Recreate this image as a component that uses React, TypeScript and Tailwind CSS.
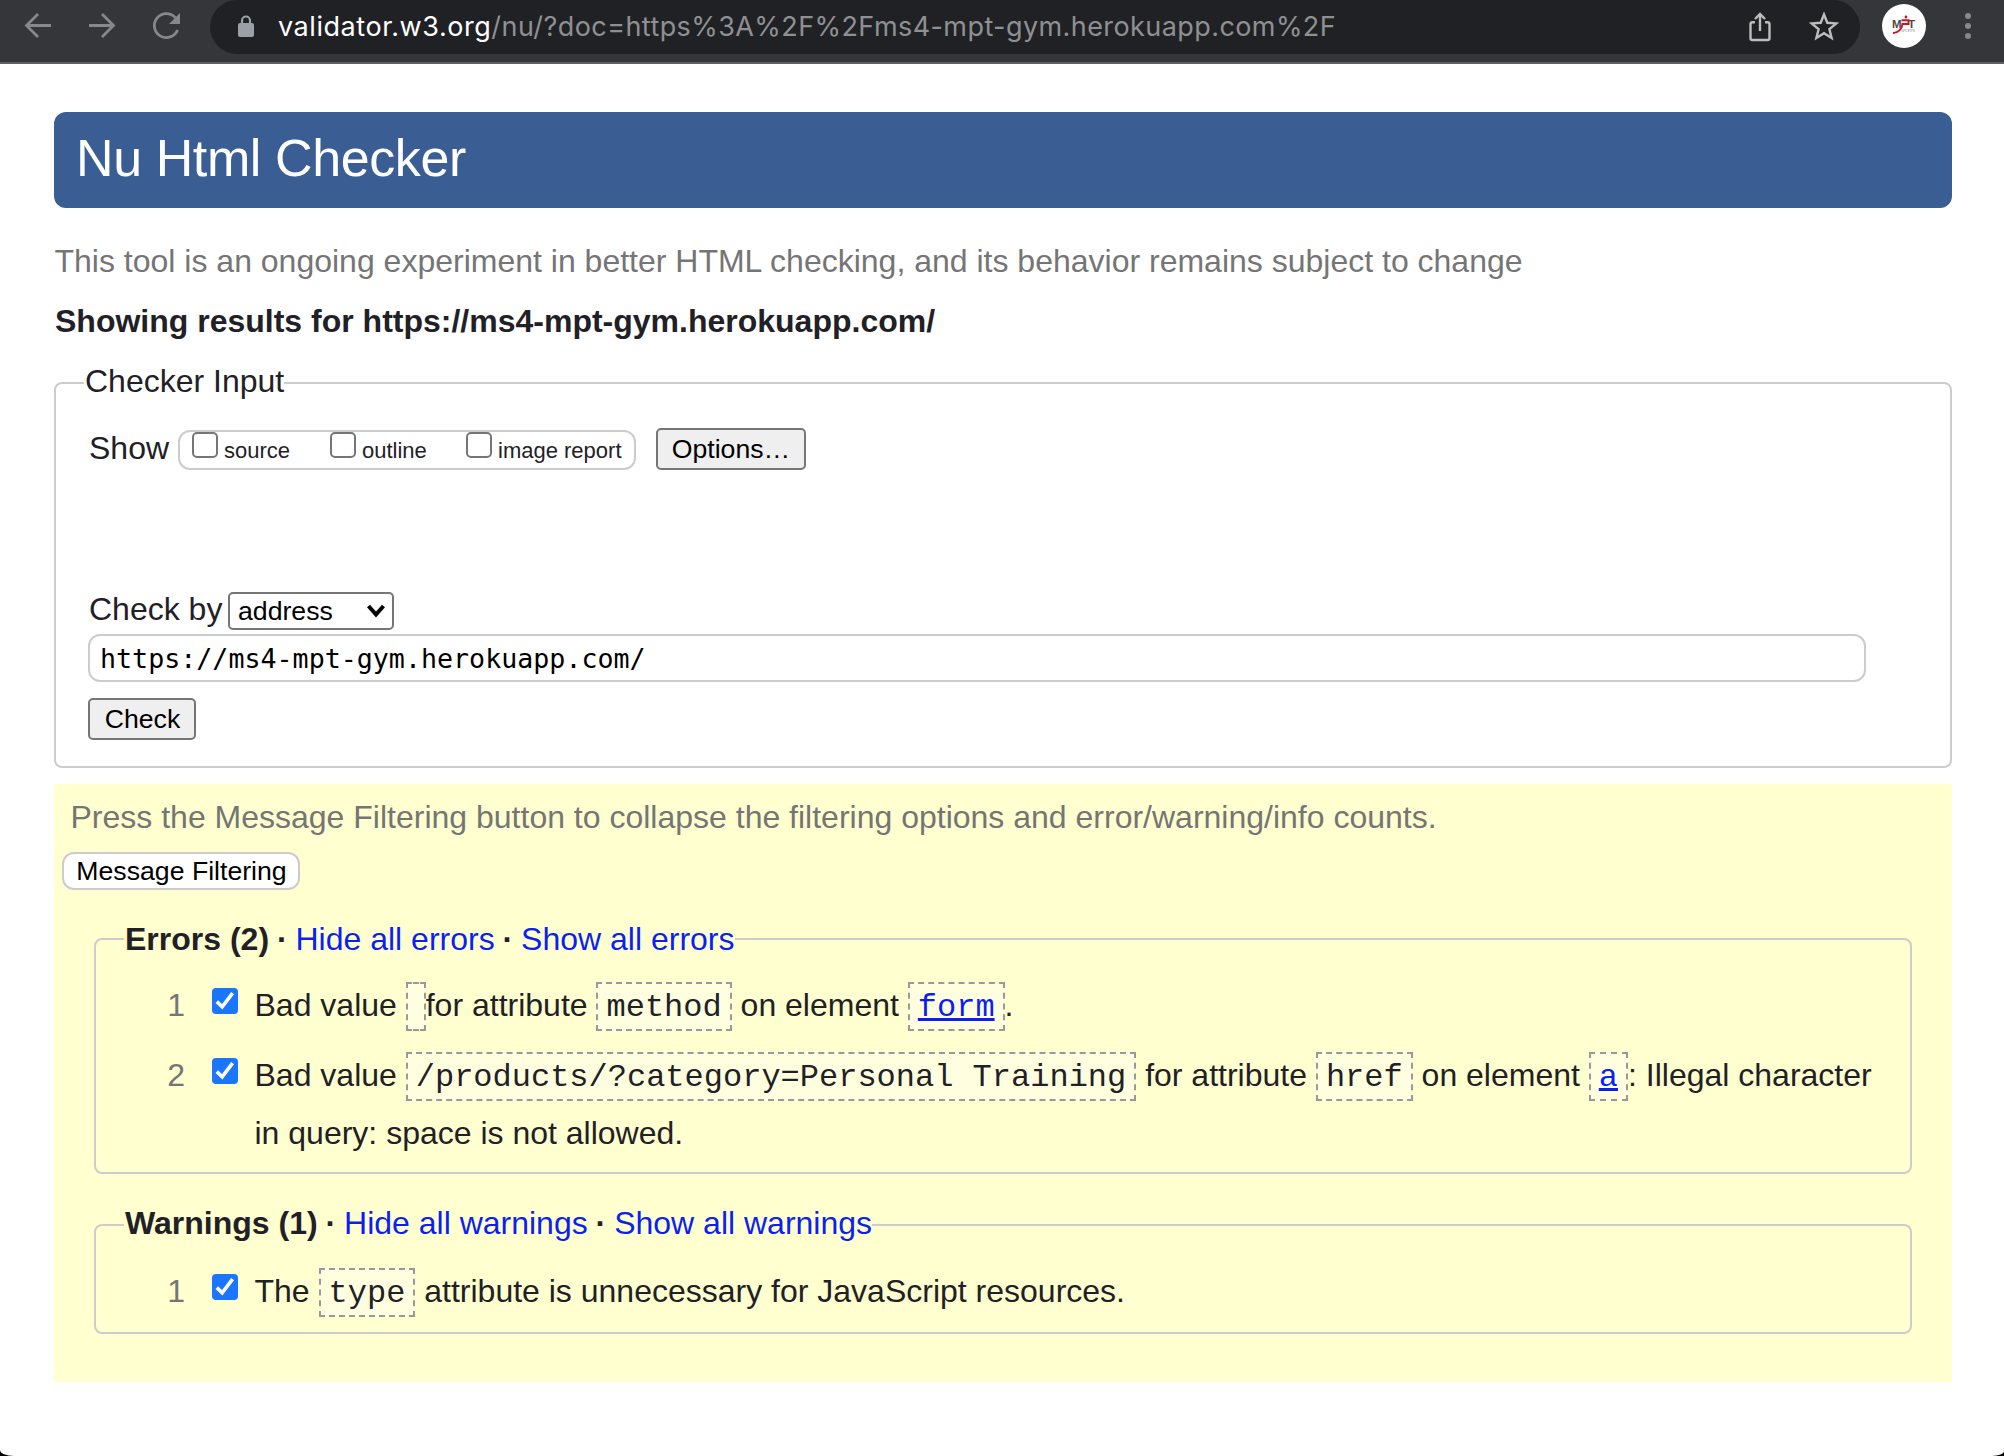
import React from "react";

function Code({ children }: { children?: React.ReactNode }) {
  return (
    <code className="border-2 border-dashed border-[#999] bg-[#ffffe0] px-2 pt-[5px] pb-[3px] font-['Liberation_Mono',monospace] text-[32px] leading-none">
      {children}
    </code>
  );
}

function CheckedBox() {
  return (
    <span className="flex h-[26px] w-[26px] shrink-0 items-center justify-center rounded-[4px] bg-[#1a75ff]">
      <svg width="26" height="26" viewBox="0 0 26 26" fill="none" stroke="#fff" strokeWidth="3.6">
        <path d="M4.8 13.6L10.2 18.8L20.6 5.2" />
      </svg>
    </span>
  );
}

function EmptyBox() {
  return <span className="h-[26px] w-[26px] shrink-0 rounded-[5px] border-2 border-[#767676] bg-white" />;
}

function Row({ n, children }: { n: number; children: React.ReactNode }) {
  return (
    <li className="flex">
      <span className="w-[89px] shrink-0 text-right text-[#757575]">{n}</span>
      <span className="ml-[27px] pt-3"><CheckedBox /></span>
      <span className="ml-[16.5px] flex-1 whitespace-nowrap">{children}</span>
    </li>
  );
}

function Dot() {
  return <b className="-mx-px">·</b>;
}

function Legend({ title, kind, className = "" }: { title: string; kind: string; className?: string }) {
  return (
    <legend className={"ml-7 pl-px text-[32px] leading-[40px] whitespace-nowrap " + className}>
      <b>{title}</b> <Dot /> <a className="text-[#0b1ff5]">Hide all {kind}</a> <Dot /> <a className="text-[#0b1ff5]">Show all {kind}</a>
    </legend>
  );
}

function Toolbar() {
  return (
    <header className="flex h-16 items-start border-b-2 border-[#5f6064] bg-[#35363a]">
      <svg className="shrink-0" width="210" height="54" viewBox="0 0 210 54" fill="none" stroke="#87888a" strokeWidth="2.8">
        <path d="M51 25.5H27M38 14L26.5 25.5L38 37" />
        <path d="M89 25.5H113M102 14L113.5 25.5L102 37" />
        <path d="M177.5 30A12 12 0 1 1 175.5 17.8" />
        <path d="M180 13V24H169Z" fill="#87888a" stroke="none" />
      </svg>
      <div className="flex h-[54px] w-[1650px] shrink-0 rounded-[27px] bg-[#202124]">
        <svg className="ml-7 mt-[15px] shrink-0" width="16" height="22" viewBox="0 0 16 22">
          <rect x="0" y="8" width="16" height="14" rx="2" fill="#9aa0a6" />
          <path d="M4 9V5.5a4 4 0 0 1 8 0V9" fill="none" stroke="#9aa0a6" strokeWidth="2.2" />
        </svg>
        <div className="ml-6 w-[1462px] shrink-0 whitespace-nowrap font-[Inter,sans-serif] text-[27px] leading-[53px] tracking-[0.42px] text-[#8f9092]">
          <span className="tracking-[0.56px] text-white">validator.w3.org</span>/nu/?doc=https%3A%2F%2Fms4-mpt-gym.herokuapp.com%2F
        </div>
        <svg className="shrink-0" width="112" height="54" viewBox="1740 0 112 54" fill="none" stroke="#bdbdbd" strokeWidth="2.4">
          <path d="M1755 22.2H1752.5A2 2 0 0 0 1750.5 24.2V38A2 2 0 0 0 1752.5 40H1767.5A2 2 0 0 0 1769.5 38V24.2A2 2 0 0 0 1767.5 22.2H1765M1760 31V14.5M1755 19L1760 14L1765 19" />
          <path d="M1824 14.5L1827.3 22.8L1836.3 23.4L1829.4 29.2L1831.6 38L1824 33.2L1816.4 38L1818.6 29.2L1811.7 23.4L1820.7 22.8Z" />
        </svg>
      </div>
      <div className="ml-[22px] mt-1 flex h-11 w-11 shrink-0 items-center justify-center rounded-full bg-white">
        <svg width="44" height="44" viewBox="1882 4 44 44">
          <text x="1892" y="28" fontFamily="Liberation Sans" fontWeight="bold" fontSize="11.5" fill="#4a4a4a">M</text>
          <text x="1908" y="28" fontFamily="Liberation Sans" fontWeight="bold" fontSize="11.5" fill="#4a4a4a">T</text>
          <path d="M1901.5 20.3H1908.5V24H1902.5C1902 29 1898 33 1893 33" fill="none" stroke="#cc1420" strokeWidth="2" />
          <circle cx="1906" cy="17" r="1.4" fill="#cc1420" />
          <text x="1901" y="32" fontFamily="Liberation Sans" fontSize="4" textLength="14" fill="#999">SPORTS</text>
        </svg>
      </div>
      <svg className="ml-[38px] shrink-0" width="8" height="54" viewBox="0 0 8 54" fill="#87888a">
        <circle cx="4" cy="16" r="3" /><circle cx="4" cy="26" r="3" /><circle cx="4" cy="36" r="3" />
      </svg>
    </header>
  );
}

export default function App() {
  return (
    <div className="h-[1456px] w-[2004px] overflow-hidden bg-black">
      <div className="h-full overflow-hidden bg-white font-['Liberation_Sans',Arial,sans-serif] text-[32px] text-[#1f2126] [border-radius:0_0_12px_14px/0_0_5px_6px]">
        <Toolbar />
        <main className="ml-[54px] mt-12 w-[1898px]">
          <h1 className="h-24 rounded-xl bg-[#3a5e93] pl-[22px] text-[52px] leading-[92px] tracking-[-0.4px] text-white">Nu Html Checker</h1>
          <p className="ml-[0.5px] mt-[33px] h-10 whitespace-nowrap leading-10 text-[#757575]">This tool is an ongoing experiment in better HTML checking, and its behavior remains subject to change</p>
          <h2 className="ml-px mt-5 h-10 whitespace-nowrap font-bold leading-10">Showing results for https://ms4-mpt-gym.herokuapp.com/</h2>
          <fieldset className="mt-5 h-[407px] rounded-lg border-2 border-[#ccc] pl-8">
            <legend className="-ml-1 pb-1 pl-px leading-10">Checker Input</legend>
            <div className="mt-[23px] flex h-[44px] items-start">
              <span className="w-[90px] pl-px pt-px leading-[38px]">Show</span>
              <div className="mt-[2px] flex h-10 w-[458px] rounded-xl border-2 border-[#ccc] pl-3 text-[22px] leading-[38px]">
                <label className="flex w-[138px] gap-[6px]"><EmptyBox />source</label>
                <label className="flex w-[136px] gap-[6px]"><EmptyBox />outline</label>
                <label className="flex gap-[6px] whitespace-nowrap"><EmptyBox />image report</label>
              </div>
              <button className="ml-5 h-[42px] w-[150px] rounded-[5px] border-2 border-[#767676] bg-[#efefef] text-[26.667px] leading-[38px] text-black">Options…</button>
            </div>
            <div className="mt-[118px] flex h-[40px] items-start">
              <span className="w-[140px] pl-px leading-[38px]">Check by</span>
              <div className="mt-[2px] flex h-[38px] w-[166px] items-center justify-between rounded-[5px] border-2 border-[#767676] bg-white pl-2 pr-[7px] text-[26.667px] leading-[34px] text-black">
                address
                <svg width="18" height="14" viewBox="0 0 18 14" fill="none" stroke="#000" strokeWidth="4"><path d="M1.5 2L9 10.5L16.5 2" /></svg>
              </div>
            </div>
            <div className="mt-1 h-12 w-[1778px] rounded-xl border-2 border-[#ccc] pl-[10px] font-['DejaVu_Sans_Mono',monospace] text-[26.667px] leading-[45px] text-black">https://ms4-mpt-gym.herokuapp.com/</div>
            <button className="mt-4 block h-[42px] w-[108px] rounded-[5px] border-2 border-[#767676] bg-[#efefef] pl-px text-[26.667px] leading-[38px] text-black">Check</button>
          </fieldset>
          <section className="mt-4 h-[598px] bg-[#ffffcf] pt-[13px]">
            <p className="ml-[16.5px] h-10 leading-10 text-[#757575]">Press the Message Filtering button to collapse the filtering options and error/warning/info counts.</p>
            <button className="ml-2 mt-[15px] block h-[38px] w-[238px] rounded-xl border-2 border-[#ccc] bg-white pl-px text-[26.667px] leading-[34px] text-black">Message Filtering</button>
            <fieldset className="ml-10 mt-[29px] h-[255px] w-[1818px] rounded-lg border-2 border-[#ccc]">
              <Legend title="Errors (2)" kind="errors" />
              <ol className="mt-[17px] leading-[58px]">
                <Row n={1}>Bad value <Code />for attribute <Code>method</Code> on element <Code><a className="text-[#0b1ff5] underline">form</a></Code>.</Row>
                <li className="h-3" />
                <Row n={2}>Bad value <Code>/products/?category=Personal Training</Code> for attribute <Code>href</Code> on element <Code><a className="text-[#0b1ff5] underline">a</a></Code>: Illegal character<br />in query: space is not allowed.</Row>
              </ol>
            </fieldset>
            <fieldset className="ml-10 mt-[29px] h-[131px] w-[1818px] rounded-lg border-2 border-[#ccc]">
              <Legend title="Warnings (1)" kind="warnings" className="pb-1" />
              <ol className="mt-[15px] leading-[58px]">
                <Row n={1}>The <Code>type</Code> attribute is unnecessary for JavaScript resources.</Row>
              </ol>
            </fieldset>
          </section>
        </main>
      </div>
    </div>
  );
}
